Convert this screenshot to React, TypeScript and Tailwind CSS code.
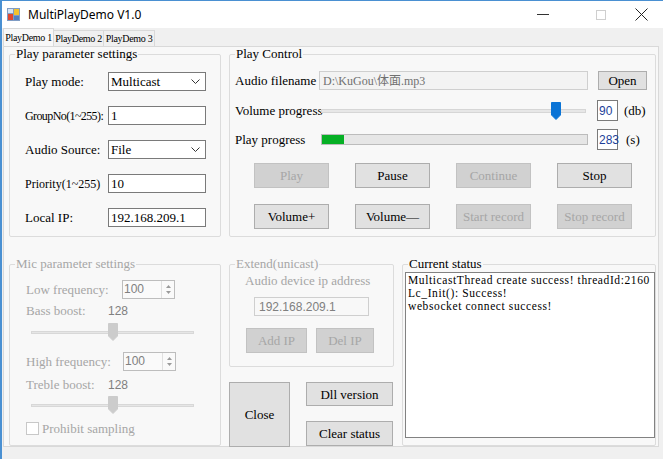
import React from "react";

const serif = "font-['Liberation_Serif',serif]";
const sans = "font-['Liberation_Sans',sans-serif]";

function Group({
    title,
    disabled,
    className,
    children,
}: {
    title: string;
    disabled?: boolean;
    className?: string;
    children?: React.ReactNode;
}) {
    return (
        <fieldset className={`border border-[#dcdcdc] rounded-[2px] min-w-0 ${className ?? ""}`}>
            <legend
                className={`ml-[5px] px-[1px] text-[13px] leading-[14px] ${serif} ${disabled ? "text-[#a6a6a6]" : "text-black"}`}
            >
                {title}
            </legend>
            {children}
        </fieldset>
    );
}

function Btn({
    children,
    disabled,
    className,
}: {
    children: React.ReactNode;
    disabled?: boolean;
    className?: string;
}) {
    return (
        <button
            type="button"
            className={`flex items-center justify-center border text-[13px] leading-none whitespace-nowrap ${serif} ${
                disabled
                    ? "bg-[#d1d1d1] border-[#c2c2c2] text-[#a6a6a6]"
                    : "bg-[#e1e1e1] border-[#adadad] text-black"
            } ${className ?? ""}`}
        >
            {children}
        </button>
    );
}

function Chevron() {
    return (
        <svg width="9" height="5" viewBox="0 0 9 5" className="shrink-0">
            <polyline points="0.5,0.5 4.5,4.5 8.5,0.5" fill="none" stroke="#333" strokeWidth="1" />
        </svg>
    );
}

function Combo({ value }: { value: string }) {
    return (
        <div className="w-[98px] h-[19px] bg-white border border-[#7a7a7a] flex items-center pl-[2px] pr-[5px]">
            <span className={`flex-1 text-[13px] leading-none ${serif}`}>{value}</span>
            <Chevron />
        </div>
    );
}

function TextBox({ value, className }: { value: string; className?: string }) {
    return (
        <div className={`h-[19px] bg-white border border-[#7a7a7a] flex items-center pl-[2px] text-[13px] leading-none ${serif} ${className ?? ""}`}>
            {value}
        </div>
    );
}

function Spin({ value }: { value: string }) {
    return (
        <div className="w-[53px] h-[19px] bg-[#fafafa] border border-[#bdbdbd] flex">
            <span className={`flex-1 pl-[1px] text-[12px] leading-[17px] text-[#808080] ${sans}`}>{value}</span>
            <div className="w-[13px] flex flex-col items-center justify-center gap-[3px] border-l border-[#e0e0e0]">
                <svg width="5" height="3" viewBox="0 0 5 3">
                    <polygon points="2.5,0 5,3 0,3" fill="#9a9a9a" />
                </svg>
                <svg width="5" height="3" viewBox="0 0 5 3">
                    <polygon points="0,0 5,0 2.5,3" fill="#9a9a9a" />
                </svg>
            </div>
        </div>
    );
}

function Thumb({ color }: { color: string }) {
    return (
        <svg width="10" height="18" viewBox="0 0 10 18">
            <path d="M0.5 0.5 H9.5 V13 L5 17.5 L0.5 13 Z" fill={color} stroke={color} />
        </svg>
    );
}

function GrayTrack({ left }: { left: number }) {
    return (
        <div className="relative ml-[21px] w-[163px] h-[18px] flex items-center">
            <div className="w-full h-[3px] bg-[#e6e6e6] border border-[#d8d8d8]" />
            <div className="absolute top-0" style={{ left }}>
                <Thumb color="#cccccc" />
            </div>
        </div>
    );
}

function AppIcon() {
    return (
        <svg width="13" height="13" viewBox="0 0 13 13">
            <rect x="0" y="0" width="13" height="13" fill="#7f9cc4" />
            <rect x="1" y="6" width="5" height="6" fill="#e0472f" />
            <rect x="7" y="1" width="5" height="6" fill="#f2c12e" />
            <rect x="1" y="1" width="5" height="4" fill="#d7e3f2" />
            <rect x="7" y="8" width="5" height="4" fill="#4f7fc1" />
        </svg>
    );
}

export default function App() {
    return (
        <div className="w-[663px] h-[459px] overflow-hidden bg-[#f0f0f0] border-l-2 border-t border-[#4a90d2] flex flex-col text-black">
            {/* title bar */}
            <div className="h-[27px] bg-white flex items-center shrink-0">
                <div className="ml-[5px]">
                    <AppIcon />
                </div>
                <span className="ml-[8px] text-[12px] text-black font-['Noto_Sans',sans-serif]">MultiPlayDemo V1.0</span>
                <div className="ml-auto flex items-center h-full">
                    <div className="w-[12px] h-px bg-[#333] mr-[47px]" />
                    <div className="w-[10px] h-[10px] border border-[#cfcfcf] mr-[29px]" />
                    <svg width="13" height="13" viewBox="0 0 13 13" className="mr-[15px]">
                        <path d="M0.5 0.5 L12.5 12.5 M12.5 0.5 L0.5 12.5" stroke="#222" strokeWidth="1" />
                    </svg>
                </div>
            </div>

            {/* tabs */}
            <div className={`h-[18px] flex items-end pl-[1px] shrink-0 text-[10px] tracking-[-0.3px] whitespace-nowrap ${serif}`}>
                <div className="h-[18px] w-[51px] bg-[#f8f8f8] border border-b-0 border-[#d9d9d9] flex items-center justify-center">
                    PlayDemo 1
                </div>
                <div className="h-[16px] w-[50px] border border-l-0 border-b-0 border-[#d9d9d9] flex items-center justify-center">
                    PlayDemo 2
                </div>
                <div className="h-[16px] w-[51px] border border-l-0 border-b-0 border-[#d9d9d9] flex items-center justify-center">
                    PlayDemo 3
                </div>
            </div>

            {/* tab page */}
            <div className="h-[401px] bg-[#f8f8f8] border border-[#d9d9d9] ml-px mr-[4px] pl-[5px] shrink-0">
                {/* top row */}
                <div className="flex gap-[8px]">
                    <Group title="Play parameter settings" className="w-[212px] h-[190px]">
                        <div className={`pt-[11px] pl-[15px] flex flex-col gap-[15px] text-[13px] ${serif}`}>
                            <div className="flex items-center h-[19px]">
                                <span className="w-[83px]">Play mode:</span>
                                <Combo value="Multicast" />
                            </div>
                            <div className="flex items-center h-[19px]">
                                <span className="w-[83px] whitespace-nowrap text-[12px] tracking-[-0.6px]">GroupNo(1~255):</span>
                                <TextBox value="1" className="w-[98px]" />
                            </div>
                            <div className="flex items-center h-[19px]">
                                <span className="w-[83px]">Audio Source:</span>
                                <Combo value="File" />
                            </div>
                            <div className="flex items-center h-[19px]">
                                <span className="w-[83px] whitespace-nowrap text-[12px]">Priority(1~255)</span>
                                <TextBox value="10" className="w-[98px]" />
                            </div>
                            <div className="flex items-center h-[19px]">
                                <span className="w-[83px]">Local IP:</span>
                                <TextBox value="192.168.209.1" className="w-[98px]" />
                            </div>
                        </div>
                    </Group>

                    <Group title="Play Control" className="w-[427px] h-[190px]">
                        <div className={`pt-[10px] pl-[5px] flex flex-col text-[13px] ${serif}`}>
                            <div className="flex items-center h-[19px]">
                                <span className="w-[84px] whitespace-nowrap">Audio filename</span>
                                <div className="w-[269px] h-[19px] bg-[#f3f3f3] border border-[#cfcfcf] flex items-center pl-[3px] text-[12px] text-[#707070] font-['Liberation_Serif','Noto_Sans_CJK_SC',serif]">
                                    D:\KuGou\体面.mp3
                                </div>
                                <Btn className="ml-[10px] w-[49px] h-[19px]">Open</Btn>
                            </div>

                            <div className="flex items-center h-[21px] mt-[10px]">
                                <span className="w-[86px] whitespace-nowrap">Volume progress</span>
                                <div className="relative w-[265px] h-[18px] flex items-center">
                                    <div className="w-full h-[4px] bg-[#e7e7e7] border border-[#d6d6d6]" />
                                    <div className="absolute top-0 left-[230px]">
                                        <Thumb color="#0a74d6" />
                                    </div>
                                </div>
                                <div className={`ml-[11px] w-[21px] h-[21px] bg-white border border-[#7a7a7a] flex items-center pl-[1px] text-[12px] text-[#1d3f9a] ${sans}`}>
                                    90
                                </div>
                                <span className="ml-[6px]">(db)</span>
                            </div>

                            <div className="flex items-center h-[21px] mt-[8px]">
                                <span className="w-[86px] whitespace-nowrap">Play progress</span>
                                <div className="w-[267px] h-[11px] bg-[#e6e6e6] border border-[#bcbcbc] flex">
                                    <div className="h-full bg-[#06b025]" style={{ width: 22 }} />
                                </div>
                                <div className={`ml-[9px] w-[21px] h-[21px] bg-white border border-[#7a7a7a] flex items-center pl-[1px] text-[12px] text-[#1d3f9a] ${sans}`}>
                                    283
                                </div>
                                <span className="ml-[8px]">(s)</span>
                            </div>

                            <div className="flex gap-[26px] pl-[19px] mt-[13px]">
                                <Btn disabled className="w-[75px] h-[25px]">Play</Btn>
                                <Btn className="w-[75px] h-[25px]">Pause</Btn>
                                <Btn disabled className="w-[75px] h-[25px]">Continue</Btn>
                                <Btn className="w-[75px] h-[25px]">Stop</Btn>
                            </div>
                            <div className="flex gap-[26px] pl-[19px] mt-[16px]">
                                <Btn className="w-[75px] h-[25px]">Volume+</Btn>
                                <Btn className="w-[75px] h-[25px]">Volume—</Btn>
                                <Btn disabled className="w-[75px] h-[25px]">Start record</Btn>
                                <Btn disabled className="w-[75px] h-[25px]">Stop record</Btn>
                            </div>
                        </div>
                    </Group>
                </div>

                {/* bottom row */}
                <div className="flex gap-[8px] mt-[20px]">
                    <Group title="Mic parameter settings" disabled className="w-[212px] h-[189px]">
                        <div className={`pt-[9px] flex flex-col text-[13px] text-[#a6a6a6] ${serif}`}>
                            <div className="flex items-center h-[19px] pl-[16px]">
                                <span className="w-[96px]">Low frequency:</span>
                                <Spin value="100" />
                            </div>
                            <div className="flex items-center h-[14px] pl-[16px] mt-[5px]">
                                <span className="w-[82px]">Bass boost:</span>
                                <span className={`text-[12px] text-[#808080] ${sans}`}>128</span>
                            </div>
                            <div className="mt-[5px]">
                                <GrayTrack left={77} />
                            </div>
                            <div className="flex items-center h-[19px] pl-[16px] mt-[11px]">
                                <span className="w-[97px]">High frequency:</span>
                                <Spin value="100" />
                            </div>
                            <div className="flex items-center h-[14px] pl-[16px] mt-[7px]">
                                <span className="w-[82px]">Treble boost:</span>
                                <span className={`text-[12px] text-[#808080] ${sans}`}>128</span>
                            </div>
                            <div className="mt-[4px]">
                                <GrayTrack left={77} />
                            </div>
                            <div className="flex items-center h-[13px] pl-[16px] mt-[8px]">
                                <div className="w-[13px] h-[13px] bg-white border border-[#c8c8c8]" />
                                <span className="ml-[3px]">Prohibit sampling</span>
                            </div>
                        </div>
                    </Group>

                    <div className="w-[165px] flex flex-col">
                        <Group title="Extend(unicast)" disabled className="w-[165px] h-[110px]">
                            <div className={`flex flex-col text-[13px] text-[#a6a6a6] ${serif}`}>
                                <span className="pl-[15px] pt-[3px] leading-[14px] whitespace-nowrap">Audio device ip address</span>
                                <div className={`ml-[24px] mt-[9px] w-[115px] h-[19px] bg-[#f8f8f8] border border-[#cfcfcf] flex items-center pl-[4px] text-[12px] text-[#808080] ${sans}`}>
                                    192.168.209.1
                                </div>
                                <div className="flex gap-[9px] pl-[16px] mt-[12px]">
                                    <Btn disabled className="w-[61px] h-[25px]">Add IP</Btn>
                                    <Btn disabled className="w-[58px] h-[25px]">Del IP</Btn>
                                </div>
                            </div>
                        </Group>
                        <div className="flex mt-[15px]">
                            <Btn className="w-[61px] h-[65px]">Close</Btn>
                            <div className="ml-[16px] flex flex-col gap-[15px]">
                                <Btn className="w-[87px] h-[24px]">Dll version</Btn>
                                <Btn className="w-[87px] h-[25px]">Clear status</Btn>
                            </div>
                        </div>
                    </div>

                    <Group title="Current status" className="w-[254px] h-[189px]">
                        <div className="px-[2px] pt-px">
                            <div className={`w-[250px] h-[166px] bg-white border border-[#828282] px-[2px] pt-[1px] text-[11.5px] leading-[13px] tracking-[0.6px] whitespace-nowrap overflow-hidden ${serif}`}>
                                <div>MulticastThread create success! threadId:2160</div>
                                <div>Lc_Init(): Success!</div>
                                <div>websocket connect success!</div>
                            </div>
                        </div>
                    </Group>
                </div>
            </div>
        </div>
    );
}
